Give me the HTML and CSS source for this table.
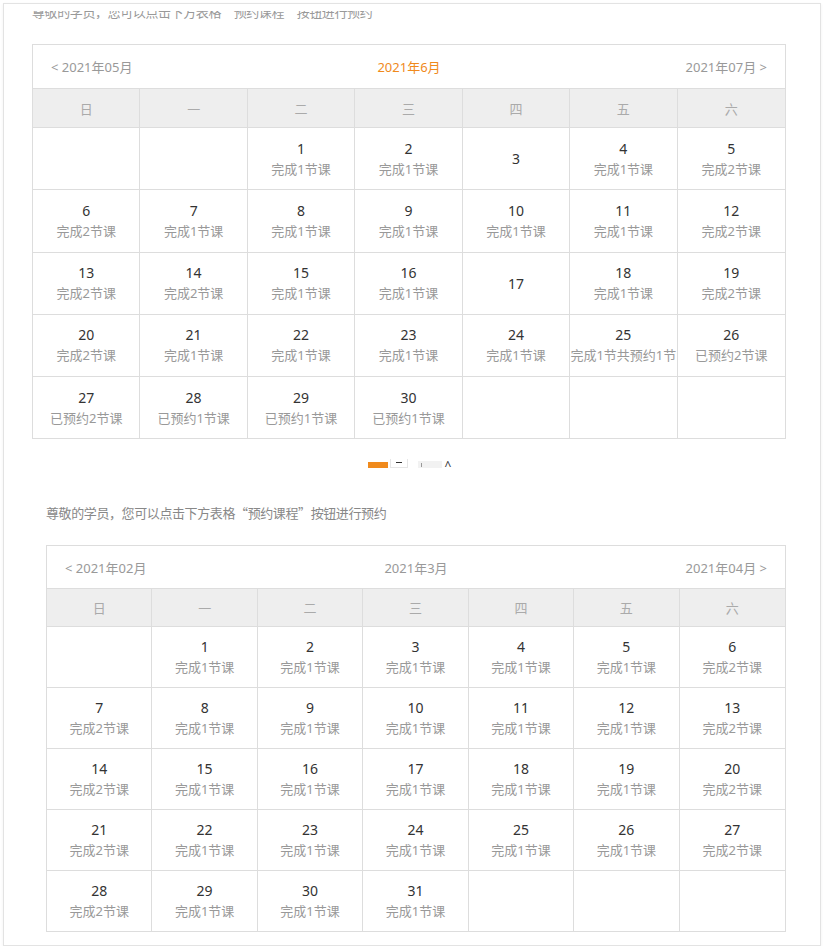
FILE: index.html
```html
<!DOCTYPE html>
<html lang="zh-CN">
<head>
<meta charset="utf-8">
<title>预约课程</title>
<link rel="stylesheet" href="styles.css">
</head>
<body>
<div class="frame">
  <div class="clip-top"><span>尊敬的学员，您可以点击下方表格<q class="cq">“</q>预约课程<q class="cq">”</q>按钮进行预约</span></div>

  <div class="cal cal-a">
    <div class="nav">
      <span class="prev">&lt; 2021年05月</span>
      <span class="cur orange">2021年6月</span>
      <span class="next">2021年07月 &gt;</span>
    </div>
    <div class="grid">
      <div class="wd">日</div><div class="wd">一</div><div class="wd">二</div><div class="wd">三</div><div class="wd">四</div><div class="wd">五</div><div class="wd">六</div>

      <div class="day"></div>
      <div class="day"></div>
      <div class="day"><b>1</b><i>完成1节课</i></div>
      <div class="day"><b>2</b><i>完成1节课</i></div>
      <div class="day"><b>3</b></div>
      <div class="day"><b>4</b><i>完成1节课</i></div>
      <div class="day"><b>5</b><i>完成2节课</i></div>

      <div class="day"><b>6</b><i>完成2节课</i></div>
      <div class="day"><b>7</b><i>完成1节课</i></div>
      <div class="day"><b>8</b><i>完成1节课</i></div>
      <div class="day"><b>9</b><i>完成1节课</i></div>
      <div class="day"><b>10</b><i>完成1节课</i></div>
      <div class="day"><b>11</b><i>完成1节课</i></div>
      <div class="day"><b>12</b><i>完成2节课</i></div>

      <div class="day"><b>13</b><i>完成2节课</i></div>
      <div class="day"><b>14</b><i>完成2节课</i></div>
      <div class="day"><b>15</b><i>完成1节课</i></div>
      <div class="day"><b>16</b><i>完成1节课</i></div>
      <div class="day"><b>17</b></div>
      <div class="day"><b>18</b><i>完成1节课</i></div>
      <div class="day"><b>19</b><i>完成2节课</i></div>

      <div class="day"><b>20</b><i>完成2节课</i></div>
      <div class="day"><b>21</b><i>完成1节课</i></div>
      <div class="day"><b>22</b><i>完成1节课</i></div>
      <div class="day"><b>23</b><i>完成1节课</i></div>
      <div class="day"><b>24</b><i>完成1节课</i></div>
      <div class="day"><b>25</b><i>完成1节共预约1节</i></div>
      <div class="day"><b>26</b><i>已预约2节课</i></div>

      <div class="day"><b>27</b><i>已预约2节课</i></div>
      <div class="day"><b>28</b><i>已预约1节课</i></div>
      <div class="day"><b>29</b><i>已预约1节课</i></div>
      <div class="day"><b>30</b><i>已预约1节课</i></div>
      <div class="day"></div>
      <div class="day"></div>
      <div class="day"></div>
    </div>
  </div>

  <div class="pager">
    <span class="pg pg-on"></span>
    <span class="pg pg-box"><span class="dash"></span></span>
    <span class="pg pg-grey"><span class="tick"></span></span>
    <span class="pg pg-caret">^</span>
  </div>

  <p class="intro">尊敬的学员，您可以点击下方表格<q class="cq">“</q>预约课程<q class="cq">”</q>按钮进行预约</p>

  <div class="cal cal-b">
    <div class="nav">
      <span class="prev">&lt; 2021年02月</span>
      <span class="cur">2021年3月</span>
      <span class="next">2021年04月 &gt;</span>
    </div>
    <div class="grid">
      <div class="wd">日</div><div class="wd">一</div><div class="wd">二</div><div class="wd">三</div><div class="wd">四</div><div class="wd">五</div><div class="wd">六</div>

      <div class="day"></div>
      <div class="day"><b>1</b><i>完成1节课</i></div>
      <div class="day"><b>2</b><i>完成1节课</i></div>
      <div class="day"><b>3</b><i>完成1节课</i></div>
      <div class="day"><b>4</b><i>完成1节课</i></div>
      <div class="day"><b>5</b><i>完成1节课</i></div>
      <div class="day"><b>6</b><i>完成2节课</i></div>

      <div class="day"><b>7</b><i>完成2节课</i></div>
      <div class="day"><b>8</b><i>完成1节课</i></div>
      <div class="day"><b>9</b><i>完成1节课</i></div>
      <div class="day"><b>10</b><i>完成1节课</i></div>
      <div class="day"><b>11</b><i>完成1节课</i></div>
      <div class="day"><b>12</b><i>完成1节课</i></div>
      <div class="day"><b>13</b><i>完成2节课</i></div>

      <div class="day"><b>14</b><i>完成2节课</i></div>
      <div class="day"><b>15</b><i>完成1节课</i></div>
      <div class="day"><b>16</b><i>完成1节课</i></div>
      <div class="day"><b>17</b><i>完成1节课</i></div>
      <div class="day"><b>18</b><i>完成1节课</i></div>
      <div class="day"><b>19</b><i>完成1节课</i></div>
      <div class="day"><b>20</b><i>完成2节课</i></div>

      <div class="day"><b>21</b><i>完成2节课</i></div>
      <div class="day"><b>22</b><i>完成1节课</i></div>
      <div class="day"><b>23</b><i>完成1节课</i></div>
      <div class="day"><b>24</b><i>完成1节课</i></div>
      <div class="day"><b>25</b><i>完成1节课</i></div>
      <div class="day"><b>26</b><i>完成1节课</i></div>
      <div class="day"><b>27</b><i>完成2节课</i></div>

      <div class="day"><b>28</b><i>完成2节课</i></div>
      <div class="day"><b>29</b><i>完成1节课</i></div>
      <div class="day"><b>30</b><i>完成1节课</i></div>
      <div class="day"><b>31</b><i>完成1节课</i></div>
      <div class="day"></div>
      <div class="day"></div>
      <div class="day"></div>
    </div>
  </div>
</div>
</body>
</html>
```

FILE: styles.css
```css
* { box-sizing: border-box; }

html, body {
  margin: 0;
  padding: 0;
  background: #fff;
}

body {
  font-family: "Noto Sans", "Noto Sans CJK SC", sans-serif;
  font-size: 13px;
  color: #999;
}

q.cq { quotes: none; font-family: "Noto Sans CJK SC", sans-serif; }
q.cq::before, q.cq::after { content: none; }

.frame {
  margin: 3px 0 0 3px;
  width: 818px;
  height: 943px;
  border: 1px solid #e3e3e3;
  box-shadow: 0 1px 3px rgba(0, 0, 0, 0.06);
  overflow: hidden;
  padding-top: 7px;
}

.clip-top {
  height: 8px;
  overflow: hidden;
  margin-left: 28px;
  color: #999;
  font-size: 13px;
  line-height: 16px;
  letter-spacing: -0.4px;
}
.clip-top span {
  display: block;
  margin-top: -7px;
  white-space: nowrap;
}

.cal {
  border: 1px solid #ddd;
  border-bottom: 0;
  background: #fff;
}
.cal-a {
  margin: 25px 0 0 28px;
  width: 754px;
}
.cal-b {
  margin: 22px 0 0 42px;
  width: 740px;
}

.nav {
  display: flex;
  align-items: center;
  justify-content: space-between;
  padding: 0 18px;
  border-bottom: 1px solid #ddd;
  color: #999;
  font-size: 13px;
}
.cal-a .nav { height: 44px; }
.cal-b .nav { height: 43px; }

.nav .prev, .nav .next { width: 110px; }
.nav .next { text-align: right; }
.nav .cur { flex: 1; text-align: center; }
.nav .orange { color: #f08a1c; }

.grid {
  display: grid;
  grid-template-columns: repeat(7, 1fr);
}

.wd, .day {
  border-right: 1px solid #ddd;
  border-bottom: 1px solid #ddd;
  display: flex;
  flex-direction: column;
  align-items: center;
  justify-content: center;
}
.wd:nth-child(7n), .day:nth-child(7n) { border-right: 0; }

.wd {
  background: #eee;
  color: #aaa;
  font-size: 13px;
}
.cal-a .wd { height: 39px; }
.cal-b .wd { height: 38px; }

.cal-a .day { height: 62.25px; }
.cal-b .day { height: 61px; }

.day b {
  font-weight: normal;
  color: #333;
  font-size: 14px;
  line-height: 21px;
}
.day i {
  font-style: normal;
  color: #999;
  font-size: 13px;
  line-height: 21px;
  white-space: nowrap;
}

.pager {
  height: 9px;
  margin-top: 20px;
  overflow: hidden;
  display: flex;
  align-items: flex-end;
  padding-left: 364px;
}
.pg { display: block; }
.pg-on {
  width: 20px;
  height: 6px;
  background: #f08a1c;
}
.pg-box {
  width: 18px;
  height: 9px;
  margin-left: 2px;
  border: 1px solid #e6e6e6;
  border-top: 0;
  position: relative;
}
.dash {
  position: absolute;
  left: 5px;
  top: 3px;
  width: 6px;
  height: 1px;
  background: #333;
}
.pg-grey {
  width: 24px;
  height: 7px;
  margin-left: 10px;
  background: #f2f2f2;
  position: relative;
}
.tick {
  position: absolute;
  left: 3px;
  top: 2px;
  width: 1px;
  height: 4px;
  background: #999;
}
.pg-caret {
  width: 12px;
  height: 9px;
  line-height: 14px;
  color: #333;
  font-size: 12px;
  text-align: center;
  overflow: hidden;
}

.intro {
  margin: 35px 0 0 42px;
  height: 20px;
  line-height: 20px;
  font-size: 13px;
  color: #888;
  letter-spacing: -0.4px;
  white-space: nowrap;
}
```
